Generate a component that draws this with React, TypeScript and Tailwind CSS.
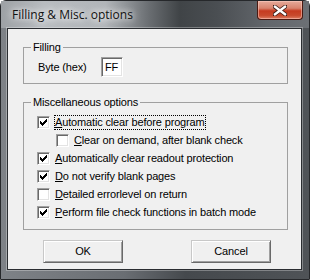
import React from "react";

const CHECK_PIXELS: [number, number][] = [
  [6, 0],
  [5, 1], [6, 1],
  [0, 2], [4, 2], [5, 2], [6, 2],
  [0, 3], [1, 3], [3, 3], [4, 3], [5, 3],
  [0, 4], [1, 4], [2, 4], [3, 4], [4, 4],
  [1, 5], [2, 5], [3, 5],
  [2, 6],
];

const OPTIONS = [
  { key: "A", rest: "utomatic clear before program", checked: true, indent: false, focus: true },
  { key: "C", rest: "lear on demand, after blank check", checked: false, indent: true, focus: false },
  { key: "A", rest: "utomatically clear readout protection", checked: true, indent: false, focus: false },
  { key: "D", rest: "o not verify blank pages", checked: true, indent: false, focus: false },
  { key: "D", rest: "etailed errorlevel on return", checked: false, indent: false, focus: false },
  { key: "P", rest: "erform file check functions in batch mode", checked: true, indent: false, focus: false },
];

function CheckBox({ checked }: { checked: boolean }) {
  return (
    <span className="flex h-[13px] w-[13px] shrink-0 items-center justify-center border border-t-[#a0a0a0] border-l-[#a0a0a0] border-r-white border-b-white bg-white shadow-[inset_1px_1px_0_#696969,inset_-1px_-1px_0_#e3e3e3]">
      {checked && (
        <svg width="7" height="7" viewBox="0 0 7 7" shapeRendering="crispEdges">
          {CHECK_PIXELS.map(([x, y]) => (
            <rect key={`${x}-${y}`} x={x} y={y} width="1" height="1" fill="#000" />
          ))}
        </svg>
      )}
    </span>
  );
}

function Button({ label }: { label: string }) {
  return (
    <button className="h-[23px] w-[80px] border border-t-[#c8c8c8] border-l-[#c8c8c8] border-r-[#696969] border-b-[#696969] bg-[#f0f0f0] text-[11px] leading-none text-black shadow-[inset_1px_1px_0_#fff,inset_-1px_-1px_0_#a0a0a0]">
      {label}
    </button>
  );
}

export default function App() {
  return (
    <div className="h-[280px] w-[310px] bg-white font-['Liberation_Sans',Arial,sans-serif]">
      <div className="flex h-[280px] w-[310px] flex-col rounded-t-[6px] border border-[#26282b] bg-[linear-gradient(90deg,#7e8287_0%,#6a6e73_40%,#45494d_60%,#4f5357_100%)]">
        <div className="flex h-[27px] shrink-0 items-start bg-[linear-gradient(90deg,#9da1a5_0%,#b8bcc0_14%,#b1b5b9_34%,#6a6e72_48%,#404447_58%,#4a4e52_70%,#62666b_86%,#6c7075_100%)]">
          <span className="ml-[11px] mt-[6px] font-['Open_Sans','Noto_Sans',sans-serif] text-[12px] leading-[15px] text-[#111] [text-shadow:0_0_6px_#fff,0_0_10px_#fff]">
            Filling &amp; Misc. options
          </span>
          <div className="ml-auto mr-[6px] flex h-[19px] w-[46px] items-center justify-center rounded-b-[4px] border border-t-0 border-[#4a1a12] bg-[linear-gradient(180deg,#e6ab9b_0%,#d8836e_40%,#c63b20_55%,#c84a2d_80%,#dd7e63_100%)] shadow-[inset_0_0_0_1px_rgba(255,210,200,0.5)]">
            <svg width="14" height="11" viewBox="0 0 14 11">
              <path
                d="M1.5 1.5 L12.5 9.5 M12.5 1.5 L1.5 9.5"
                stroke="#3b1a14"
                strokeWidth="4"
                strokeLinecap="square"
              />
              <path
                d="M2 1.8 L12 9.2 M12 1.8 L2 9.2"
                stroke="#fff"
                strokeWidth="2.4"
                strokeLinecap="square"
              />
            </svg>
          </div>
        </div>

        <div className="ml-[6px] mr-[7px] h-[242px] shrink-0 border border-[#2a2d31] bg-[#f0f0f0] text-[11px] leading-[13px] tracking-[-0.15px] text-black shadow-[0_0_0_1px_rgba(255,255,255,0.3)]">
          <fieldset className="ml-[15px] mt-[12px] h-[43px] w-[265px] border border-[#a0a0a0]">
            <legend className="ml-[7px] px-[2px] leading-[13px]">Filling</legend>
            <div className="mt-[3px] flex items-center pl-[14px]">
              <span className="w-[63px]">Byte (hex)</span>
              <input
                readOnly
                value="FF"
                className="h-[20px] w-[22px] border border-t-[#a0a0a0] border-l-[#a0a0a0] border-r-white border-b-white bg-white pl-[3px] text-[11px] text-black shadow-[inset_1px_1px_0_#696969,inset_-1px_-1px_0_#e3e3e3] outline-none"
              />
            </div>
          </fieldset>

          <fieldset className="ml-[15px] mt-[12px] h-[134px] w-[265px] border border-[#a0a0a0]">
            <legend className="ml-[7px] px-[2px] leading-[13px]">Miscellaneous options</legend>
            <div className="flex flex-col pt-[4px]">
              {OPTIONS.map((o) => (
                <div
                  key={o.key + o.rest}
                  className={`flex h-[18px] items-center gap-[4px] ${o.indent ? "pl-[32px]" : "pl-[13px]"}`}
                >
                  <CheckBox checked={o.checked} />
                  <span
                    className={`border leading-[13px] ${o.focus ? "border-dotted border-black" : "border-transparent"}`}
                  >
                    <span className="underline underline-offset-[1px]">{o.key}</span>
                    {o.rest}
                  </span>
                </div>
              ))}
            </div>
          </fieldset>

          <div className="mt-[10px] flex">
            <div className="ml-[35px]">
              <Button label="OK" />
            </div>
            <div className="ml-[68px]">
              <Button label="Cancel" />
            </div>
          </div>
        </div>
      </div>
    </div>
  );
}
